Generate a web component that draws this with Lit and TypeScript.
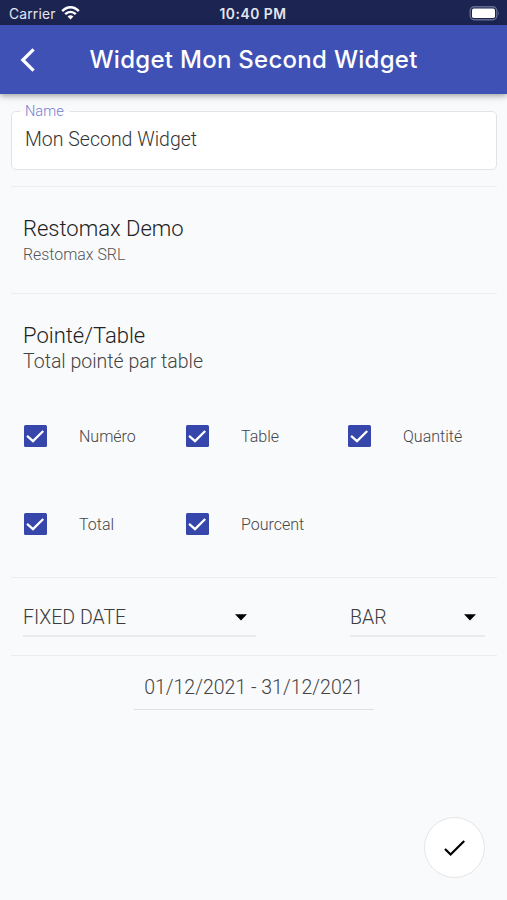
import { LitElement, html, css } from "lit";
import { customElement, property } from "lit/decorators.js";

@customElement("check-option")
class CheckOption extends LitElement {
  @property() label = "";
  static styles = css`
    :host { display: flex; align-items: center; height: 88px; gap: 32.5px; }
    .box { width: 22.5px; height: 22.5px; border-radius: 1.5px; background: #3746ab; flex: none; display: block; }
    .text { font-size: 16px; line-height: 24px; padding-top: 1px; color: #464646; white-space: nowrap; }
  `;
  render() {
    return html`
      <svg class="box" viewBox="0 0 22 22">
        <path d="M3 10.6 L8.8 15.8 L18.8 5.8" fill="none" stroke="#fff" stroke-width="2.2" />
      </svg>
      <span class="text">${this.label}</span>
    `;
  }
}

@customElement("select-field")
class SelectField extends LitElement {
  @property() value = "";
  static styles = css`
    :host {
      display: flex; align-items: center; justify-content: space-between;
      box-sizing: border-box; height: 38px; padding-right: 9px;
      border-bottom: 2px solid #e9eaeb; color: #3c3c3c;
    }
    .value { font-size: 19.5px; line-height: 34px; padding-top: 2px; }
    .caret { width: 12px; height: 7px; display: block; }
  `;
  render() {
    return html`
      <span class="value">${this.value}</span>
      <svg class="caret" viewBox="0 0 12 7"><path d="M0 .3H12L6 6.5Z" fill="#000" /></svg>
    `;
  }
}

@customElement("app-root")
class AppRoot extends LitElement {
  static styles = css`
    :host {
      display: flex; flex-direction: column; position: relative;
      width: 507px; height: 900px; overflow: hidden; background: #f9fafc;
      font-family: Roboto, "Liberation Sans", sans-serif; font-weight: 300; color: #333;
    }
    .status {
      display: grid; grid-template-columns: 1fr auto 1fr; align-items: center; flex: none;
      height: 25px; padding: 2px 7px 0 9px; box-sizing: border-box; background: #1c2452; color: #e4e6f0;
      font: 500 13px/22px Inter, sans-serif;
    }
    .carrier { display: flex; align-items: center; gap: 5.5px; font-size: 13.8px; font-weight: 400; letter-spacing: .2px; }
    .clock { font-weight: 600; font-size: 13.8px; letter-spacing: .55px; margin: 0 1px 0 -2px; }
    .wifi { width: 19px; height: 14px; display: block; margin-top: -1px; }
    .battery { width: 31px; height: 15px; justify-self: end; display: block; margin-top: -1px; }
    .header {
      display: flex; align-items: center; flex: none; height: 69px; box-sizing: border-box;
      padding-left: 20px; background: #3f51b5; color: #fff;
      box-shadow: 0 2px 5px rgba(0,0,0,.28), 0 3px 10px rgba(0,0,0,.08); z-index: 1;
    }
    .back { width: 16px; height: 24px; display: block; }
    .title { margin: 0 0 0 53.5px; padding-top: 1px; font: 500 24px/32px Inter, sans-serif; letter-spacing: .28px; white-space: nowrap; }
    .content { padding: 9px 10.5px 0 11px; }
    .field {
      box-sizing: border-box; height: 67px; margin: 0; padding: 0 13px 0 8px; min-width: 0;
      border: 1px solid #e2e3e3; border-radius: 5px; 
      background: linear-gradient(#fff, #fff) 0 0 / 100% 100%;
    }
    .field legend { padding: 0 6px 0 5px; font-size: 14.6px; line-height: 17px; color: #7380cc; }
    .field .value { font-size: 19.5px; line-height: 24px; padding: 8px 5px 0; color: #343434; }
    .divider { height: 1px; background: #ededef; }
    .divider.first { margin-top: 16px; }
    .shop { height: 106px; padding: 28px 12px 0; box-sizing: border-box; }
    .heading { font-size: 22px; line-height: 27px; color: #222; }
    .small { font-size: 15.9px; line-height: 22px; margin-top: 2px; color: #555; }
    .widget { height: 283px; padding: 28px 12px 0; box-sizing: border-box; }
    .subtitle { font-size: 19.5px; line-height: 23px; padding-top: 1px; color: #444; }
    .options { display: grid; grid-template-columns: repeat(3, 162px); margin-top: 19px; padding-left: 1px; }
    .selects { display: grid; grid-template-columns: 233px 135px; justify-content: space-between; height: 77px; padding: 21px 11.5px 0 12px; box-sizing: border-box; }
    .dates { width: 240px; height: 54px; margin: 0 auto; box-sizing: border-box; border-bottom: 1px solid #dfe0e1; text-align: center; font-size: 19.5px; line-height: 64px; color: #444; white-space: nowrap; }
    .confirm {
      position: absolute; right: 22px; bottom: 22px; width: 61px; height: 61px; padding: 0;
      display: grid; place-items: center; background: #fff; border: 1.5px solid #e5e5e5; border-radius: 50%;
    }
    .confirm svg { width: 24px; height: 20px; display: block; }
  `;
  options = ["Numéro", "Table", "Quantité", "Total", "Pourcent"];
  render() {
    return html`
      <div class="status">
        <span class="carrier">Carrier
          <svg class="wifi" viewBox="0 0 19 14" fill="none" stroke="#fff" stroke-width="2.5">
            <path d="M1.2 5.2C6-.0 13-.0 17.8 5.2M4.2 8.2C7.3 5.2 11.7 5.2 14.8 8.2" />
            <path d="M6.6 10.4Q9.5 8.3 12.4 10.4L9.5 13.6Z" fill="#fff" stroke="none" />
          </svg>
        </span>
        <span class="clock">10:40 PM</span>
        <svg class="battery" viewBox="0 0 31 15">
          <rect x="1.2" y=".8" width="26.6" height="13" rx="4" fill="none" stroke="#656b8e" stroke-width="1.4" />
          <rect x="3" y="2.6" width="23" height="9.4" rx="1.8" fill="#fff" />
          <path d="M29.2 5Q31 7.3 29.2 9.6Z" fill="#656b8e" />
        </svg>
      </div>
      <header class="header">
        <svg class="back" viewBox="0 0 16 24"><path d="M13.6 1.4 2.8 12 13.6 22.6" fill="none" stroke="#fff" stroke-width="3.2" /></svg>
        <h1 class="title">Widget Mon Second Widget</h1>
      </header>
      <main class="content">
        <fieldset class="field">
          <legend>Name</legend>
          <div class="value">Mon Second Widget</div>
        </fieldset>
        <div class="divider first"></div>
        <section class="shop">
          <div class="heading">Restomax Demo</div>
          <div class="small">Restomax SRL</div>
        </section>
        <div class="divider"></div>
        <section class="widget">
          <div class="heading">Pointé/Table</div>
          <div class="subtitle">Total pointé par table</div>
          <div class="options">${this.options.map((o) => html`<check-option .label=${o}></check-option>`)}</div>
        </section>
        <div class="divider"></div>
        <section class="selects">
          <select-field value="FIXED DATE"></select-field>
          <select-field value="BAR"></select-field>
        </section>
        <div class="divider"></div>
        <div class="dates">01/12/2021 - 31/12/2021</div>
      </main>
      <button class="confirm" aria-label="Confirm">
        <svg viewBox="0 0 24 20"><path d="M2 11 7.6 16.5 21.2 3" fill="none" stroke="#000" stroke-width="2.3" /></svg>
      </button>
    `;
  }
}
